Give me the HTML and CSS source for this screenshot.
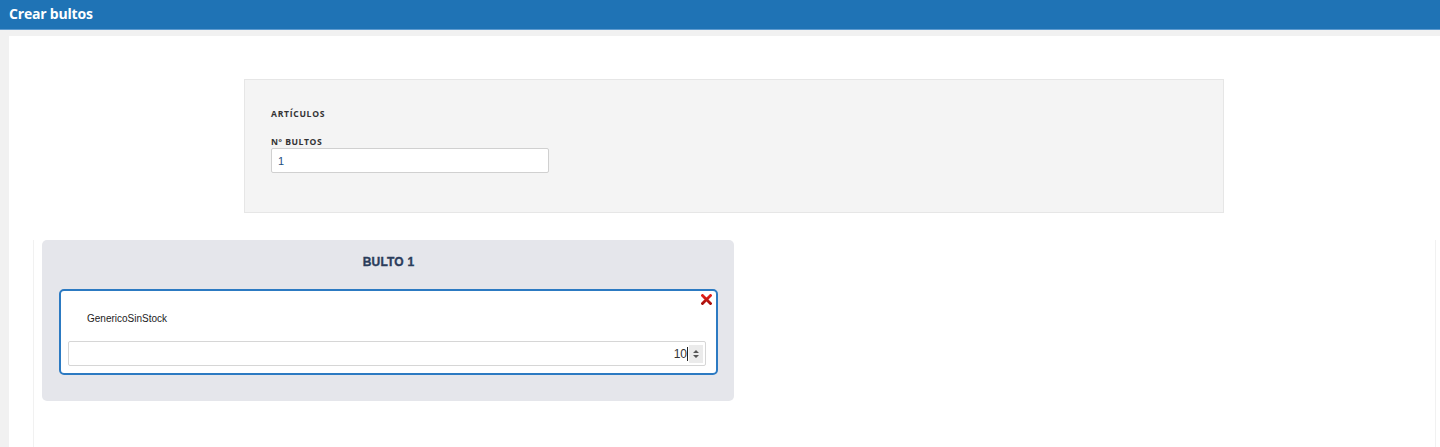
FILE: index.html
```html
<!DOCTYPE html>
<html lang="es">
<head>
<meta charset="utf-8">
<title>Crear bultos</title>
<link rel="stylesheet" href="styles.css">
</head>
<body>
<header class="topbar"><h1 class="title">Crear bultos</h1></header>
<div class="page">
  <main class="content">
    <section class="panel">
      <h2 class="section-label">ARTÍCULOS</h2>
      <label class="field-label" for="nbultos">Nº BULTOS</label>
      <input class="field-input" id="nbultos" type="text" value="1">
    </section>
    <section class="bultos">
      <div class="bulto">
        <h3 class="bulto-title">BULTO 1</h3>
        <div class="item">
          <button class="remove" aria-label="Eliminar">
            <svg width="11" height="11" viewBox="0 0 11 11"><defs><linearGradient id="rg" x1="0" y1="0" x2="0" y2="1"><stop offset="0" stop-color="#e4211b"/><stop offset="1" stop-color="#a8100c"/></linearGradient></defs><path d="M1.5 1.5 L9.5 9.5 M9.5 1.5 L1.5 9.5" stroke="url(#rg)" stroke-width="2.8" stroke-linecap="square"/></svg>
          </button>
          <div class="item-name">GenericoSinStock</div>
          <div class="qty">
            <span class="qty-value">10</span><span class="caret"></span>
            <span class="spin"><svg width="8" height="10" viewBox="0 0 8 10"><path d="M4 1 L7 4 H1 Z M4 9 L7 6 H1 Z" fill="#555"/></svg></span>
          </div>
        </div>
      </div>
    </section>
  </main>
</div>
</body>
</html>
```
FILE: styles.css
```css
* { box-sizing: border-box; }
html, body { margin: 0; padding: 0; background: #f3f3f3; }
body { font-family: "Liberation Sans", Arial, sans-serif; color: #222; }

.topbar {
  height: 30px;
  background: #1f73b5;
  border-bottom: 1px solid #5f9bcf;
  display: flex;
  align-items: center;
  padding-left: 9px;
}
.title {
  margin: 0;
  color: #fff;
  font-family: "Open Sans", "Noto Sans", sans-serif;
  font-weight: 700;
  font-size: 14px;
  letter-spacing: -0.2px;
  line-height: 1;
  padding-bottom: 1px;
}

.page {
  padding: 6px 0 0 9px;
  background: #f1f1f1;
}
.content {
  background: #fff;
  min-height: 411px;
  padding-top: 43px;
}

.panel {
  margin-left: 235px;
  width: 980px;
  height: 134px;
  background: #f4f4f4;
  border: 1px solid #e6e6e6;
  padding: 28px 26px 0 26px;
  display: flex;
  flex-direction: column;
  align-items: flex-start;
}
.section-label {
  margin: 0 0 16px;
  font-family: "Open Sans", "Noto Sans", sans-serif;
  font-size: 8.6px;
  font-weight: 700;
  letter-spacing: 0.7px;
  color: #333;
  line-height: 12px;
}
.field-label {
  font-family: "Open Sans", "Noto Sans", sans-serif;
  font-size: 8.6px;
  font-weight: 700;
  letter-spacing: 0.55px;
  color: #333;
  line-height: 12px;
  margin-bottom: 0;
}
.field-input {
  width: 278px;
  height: 25px;
  border: 1px solid #d0d0d0;
  border-radius: 2px;
  background: #fff;
  font-family: "Liberation Sans", Arial, sans-serif;
  font-size: 11px;
  color: #1f4f80;
  padding: 0 6px;
  outline: none;
}

.bultos {
  margin: 27px 4px 0 24px;
  border-left: 1px solid #f1f1f1;
  border-right: 1px solid #f1f1f1;
  padding-left: 8px;
  min-height: 208px;
}
.bulto {
  width: 692px;
  height: 161px;
  background: #e5e6eb;
  border-radius: 5px;
  padding: 15px 16px 0 17px;
}
.bulto-title {
  margin: 0 0 20px;
  text-align: center;
  font-family: "Liberation Sans", Arial, sans-serif;
  font-size: 12px;
  font-weight: 700;
  color: #2b3d5b;
  line-height: 14px;
  letter-spacing: 0.2px;
  -webkit-text-stroke: 0.35px #2b3d5b;
}
.item {
  position: relative;
  height: 86px;
  background: #fff;
  border: 2px solid #2c7ac2;
  border-radius: 5px;
  padding: 21px 10px 0 7px;
}
.remove {
  position: absolute;
  top: 3px;
  right: 4px;
  border: 0;
  background: none;
  padding: 0;
  width: 11px;
  height: 11px;
  line-height: 0;
}
.item-name {
  font-size: 10px;
  color: #222;
  padding-left: 19px;
  line-height: 13px;
  margin-bottom: 16px;
}
.qty {
  height: 25px;
  border: 1px solid #d6d6d6;
  border-radius: 2px;
  display: flex;
  align-items: center;
  justify-content: flex-end;
  padding-right: 2px;
}
.qty-value {
  font-size: 12px;
  color: #333;
}
.caret {
  width: 1px;
  height: 14px;
  background: #222;
  margin: 0 1px 0 0;
}
.spin {
  width: 14px;
  height: 18px;
  background: #ebebeb;
  display: flex;
  align-items: center;
  justify-content: center;
}
```
